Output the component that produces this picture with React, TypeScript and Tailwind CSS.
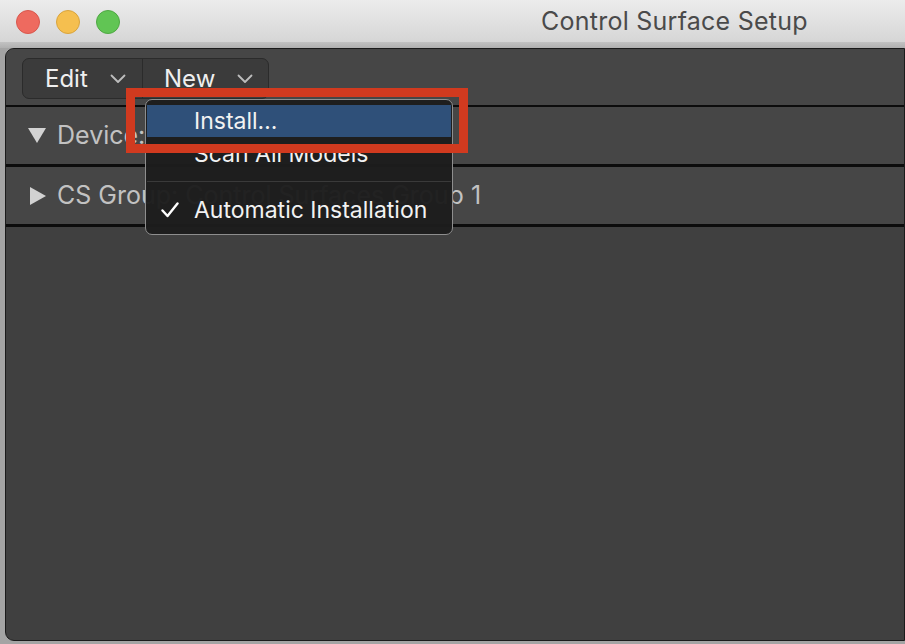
import React from "react";

function Chevron() {
  return (
    <svg width="16" height="10" viewBox="0 0 16 10" fill="none" className="text-[#bdbdbd]">
      <path d="M1.5 1.5 L8 8 L14.5 1.5" stroke="currentColor" strokeWidth="1.8" strokeLinecap="round" strokeLinejoin="round" />
    </svg>
  );
}

function Disclosure({ open }: { open: boolean }) {
  return open ? (
    <svg width="18" height="15" viewBox="0 0 18 15" className="text-[#d2d2d2]">
      <path d="M0 0 H18 L9 15 Z" fill="currentColor" />
    </svg>
  ) : (
    <svg width="16" height="18" viewBox="0 0 16 18" className="text-[#d2d2d2]">
      <path d="M0 0 L16 9 L0 18 Z" fill="currentColor" />
    </svg>
  );
}

function Check() {
  return (
    <svg width="18" height="16" viewBox="0 0 18 16" fill="none" className="text-white">
      <path d="M1.5 8.5 L6.5 14 L16.5 1.5" stroke="currentColor" strokeWidth="2.4" strokeLinecap="round" strokeLinejoin="round" />
    </svg>
  );
}

export default function App() {
  return (
    <div className="relative w-[905px] h-[644px] overflow-hidden bg-[#a4a4a4] flex flex-col font-['Inter','Liberation_Sans',sans-serif]">
      {/* Title bar */}
      <div className="h-[42px] shrink-0 bg-gradient-to-b from-[#ececec] to-[#d6d6d6] flex items-center pl-[16px] pt-px">
        <div className="flex gap-[16px]">
          <span className="w-[24px] h-[24px] rounded-full bg-[#ee6a5f] border border-[#d9574d]" />
          <span className="w-[24px] h-[24px] rounded-full bg-[#f5bf4f] border border-[#d9a43d]" />
          <span className="w-[24px] h-[24px] rounded-full bg-[#61c554] border border-[#4fa843]" />
        </div>
        <span className="ml-[421px] text-[25px] text-[#4a4a4a] leading-none tracking-[0.01em]">Control Surface Setup</span>
      </div>
      <div className="h-[6px] shrink-0 bg-gradient-to-b from-[#c2c2c2] to-[#b0b0b0]" />

      {/* Panel */}
      <div className="flex-1 ml-[5px] mb-[3px] rounded-l-[9px] border border-[#1b1b1b] bg-[#404040] overflow-hidden flex flex-col">
        <div className="h-[56px] shrink-0 bg-[#464646] pl-[16px] pt-[9px]">
          <div className="inline-flex h-[41px] rounded-[7px] border border-[#2b2b2b] bg-[#3b3b3b]">
            <div className="w-[120px] flex items-center pl-[22px] gap-[22px] border-r border-[#2b2b2b]">
              <span className="text-[24px] text-[#efefef] leading-none">Edit</span>
              <Chevron />
            </div>
            <div className="w-[125px] flex items-center pl-[21px] gap-[22px]">
              <span className="text-[24px] text-[#efefef] leading-none">New</span>
              <Chevron />
            </div>
          </div>
        </div>
        <div className="h-[2px] shrink-0 bg-[#0c0c0c]" />
        <div className="h-[57px] shrink-0 bg-[#464646] flex items-center pl-[22px] gap-[11px]">
          <Disclosure open />
          <span className="text-[25px] text-[#c2c2c2] whitespace-nowrap">Device:</span>
        </div>
        <div className="h-[3px] shrink-0 bg-[#0c0c0c]" />
        <div className="h-[57px] shrink-0 bg-[#464646] flex items-center pl-[24px] gap-[11px]">
          <Disclosure open={false} />
          <span className="text-[25px] text-[#c2c2c2] whitespace-nowrap">CS Group: Control Surfaces Group 1</span>
        </div>
        <div className="h-[3px] shrink-0 bg-[#0c0c0c]" />
      </div>

      {/* Dropdown menu */}
      <div className="absolute left-[145px] top-[99px] w-[308px] rounded-[7px] border border-[#8e8e8e] bg-[#1d1d1d]/[0.97] pt-[5px] pb-[6px] px-px">
        <div className="h-[32px] bg-[#2f5079] flex items-center pl-[47px] text-[23px] text-[#f2f2f2]">Install…</div>
        <div className="h-[34px] flex items-center pl-[47px] text-[23px] text-[#f2f2f2]">Scan All Models</div>
        <div className="h-[21px] flex items-center">
          <div className="h-px w-full bg-[#3a3a3a]" />
        </div>
        <div className="h-[36px] flex items-center pl-[14px] gap-[15px] text-[23px] text-[#f2f2f2]">
          <Check />
          <span>Automatic Installation</span>
        </div>
      </div>

      {/* Highlight box */}
      <div className="absolute left-[126px] top-[88px] w-[342px] h-[65px] border-[9px] border-[#d13a1f]" />
    </div>
  );
}
